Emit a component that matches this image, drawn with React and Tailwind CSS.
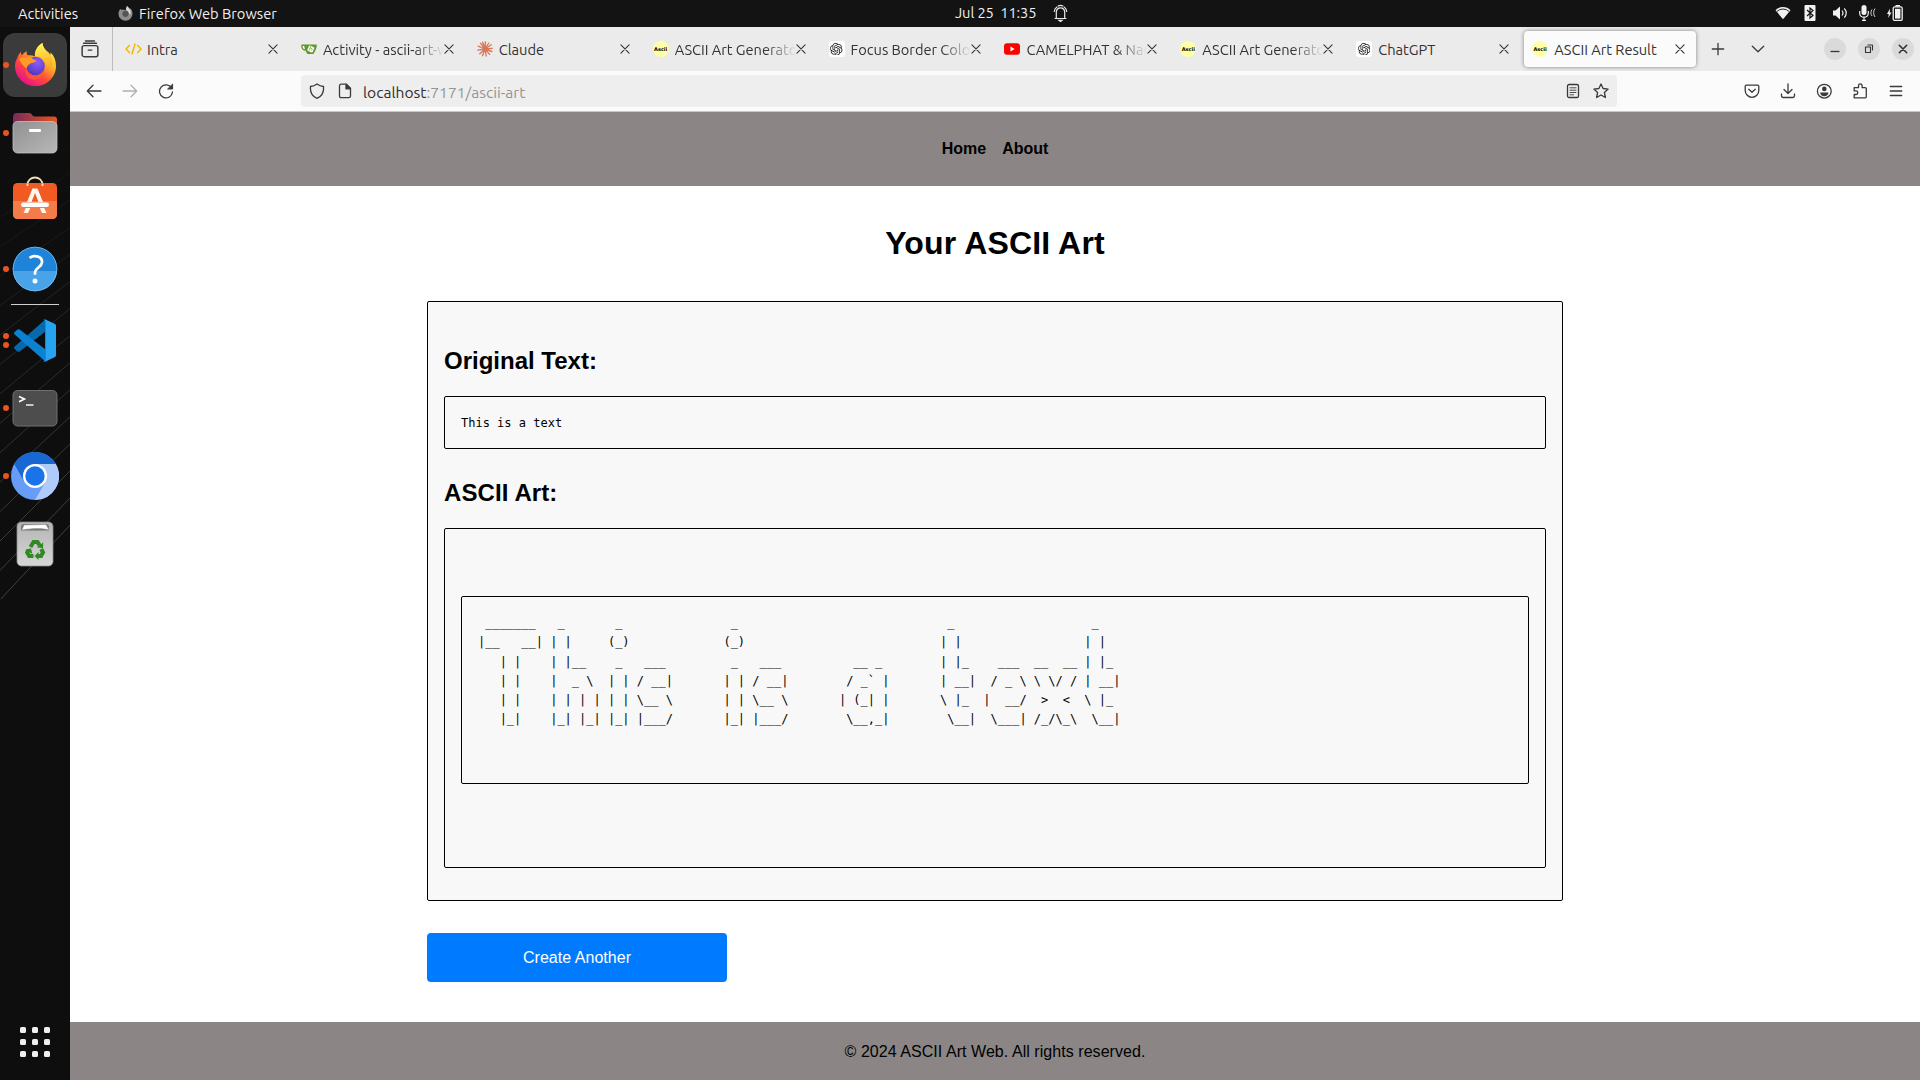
import React from "react";
import { SiOpenai } from "react-icons/si";

const UI = "font-['Ubuntu','Noto_Sans',sans-serif]";

const ART = [
  String.raw` _______   _       _               _                             _                   _`,
  String.raw`|__   __| | |     (_)             (_)                           | |                 | |`,
  String.raw`   | |    | |__    _   ___         _   ___          __ _        | |_    ___  __  __ | |_`,
  String.raw`   | |    |  _ \  | | / __|       | | / __|        / _${"`"} |       | __|  / _ \ \ \/ / | __|`,
  String.raw`   | |    | | | | | | \__ \       | | \__ \       | (_| |       \ |_  |  __/  >  <  \ |_`,
  String.raw`   |_|    |_| |_| |_| |___/       |_| |___/        \__,_|        \__|  \___| /_/\_\  \__|`,
].join("\n");

function Line({ className = "", size = 16, children }) {
  return (
    <svg
      width={size}
      height={size}
      viewBox="0 0 16 16"
      fill="none"
      stroke="currentColor"
      strokeWidth="1.3"
      strokeLinecap="round"
      strokeLinejoin="round"
      className={"shrink-0 " + className}
    >
      {children}
    </svg>
  );
}

/* ---------- favicons ---------- */
const AsciiFav = () => (
  <span className="flex size-4 shrink-0 items-center justify-center rounded-full bg-[#ffffa6] font-['DejaVu_Sans'] text-[5px] font-bold leading-none text-black">
    Ascii
  </span>
);
const GptFav = () => (
  <span className="flex size-4 shrink-0 items-center justify-center rounded-[3px] bg-white text-[12.5px] text-[#222]">
    <SiOpenai />
  </span>
);
const IntraFav = () => (
  <svg width="17" height="16" viewBox="0 0 17 16" fill="none" stroke="#f5b800" strokeWidth="1.5" className="-mr-px shrink-0">
    <path d="M4.8 4 1 8l3.8 4M12.2 4 16 8l-3.8 4M10.2 2.5 6.8 13.5" />
  </svg>
);
const GiteaFav = () => (
  <svg width="16" height="16" viewBox="0 0 16 16" className="shrink-0">
    <path d="M1 3.4h14.6c.5 2.600-.5 4.800-2.500 8.500-.5.9-1.100 1.200-2 1.200H7.600c-1 0-1.600-.5-2.100-1.500L4.700 9.800C2.200 9.700.2 7.800.2 5.200c0-.8.2-1.800.8-1.800Z" fill="#609926" />
    <path d="M1.600 4.900c0 1.800.8 3 2.300 3.400L3.200 4.900Z" fill="#fff" />
    <rect x="6.900" y="5.100" width="5.800" height="5.800" rx="1" transform="rotate(25 9.800 8)" fill="#fff" />
    <path d="m10 4.500-1.800 5M9.300 7l2 1-.7 1.600" stroke="#609926" strokeWidth=".7" fill="none" />
  </svg>
);
const ClaudeFav = () => (
  <svg width="16" height="16" viewBox="0 0 16 16" stroke="#d97757" strokeWidth="1.35" strokeLinecap="round" className="shrink-0">
    <path d="M8 8 8.400.9M8 8l3.800-6M8 8l6.300-4.200M8 8l7.200-.7M8 8l6.900 2.500M8 8l4.600 5.400M8 8l1.200 7M8 8l-2.500 6.700M8 8l-5.200 4.800M8 8 .8 9.100M8 8 1.200 5.200M8 8 3.500 2.200M8 8 5.700 1.200" />
  </svg>
);
const YoutubeFav = () => (
  <svg width="16" height="16" viewBox="0 0 16 16" className="shrink-0">
    <rect x="0" y="2.200" width="16" height="11.500" rx="3" fill="#f00" />
    <path d="M6.500 5.600v4.800L10.600 8Z" fill="#fff" />
  </svg>
);

const Cross = () => (
  <Line size={10} className="text-[#3a3a3a]">
    <path d="M1.500 1.500l13 13M14.500 1.500l-13 13" strokeWidth="1.900" />
  </Line>
);

const TABS = [
  { t: "Intra", icon: IntraFav },
  { t: "Activity - ascii-art-web", icon: GiteaFav, fade: true },
  { t: "Claude", icon: ClaudeFav },
  { t: "ASCII Art Generator", icon: AsciiFav, fade: true },
  { t: "Focus Border Color", icon: GptFav, fade: true },
  { t: "CAMELPHAT & Nadia", icon: YoutubeFav, fade: true },
  { t: "ASCII Art Generator", icon: AsciiFav, fade: true },
  { t: "ChatGPT", icon: GptFav },
  { t: "ASCII Art Result", icon: AsciiFav, active: true },
];

function Tab({ t, icon: Icon, fade, active }) {
  return (
    <div className="flex h-11 w-[175.9px] shrink-0 items-center px-[2px]">
      <div
        className={
          "flex h-9 w-full items-center rounded-[4px] pl-2 pr-[11px] " +
          (active ? "bg-[#fbfbfb] shadow-[0_0_4px_rgba(0,0,0,0.45)]" : "")
        }
      >
        <Icon />
        <span
          className={
            "ml-[6px] min-w-0 flex-1 overflow-hidden whitespace-nowrap pt-[2px] text-[14.667px] leading-5 tracking-[-0.03px] text-[#333]" +
            (fade ? " [mask-image:linear-gradient(to_right,#000_75%,transparent)]" : "")
          }
        >
          {t}
        </span>
        <Cross />
      </div>
    </div>
  );
}

/* ---------- desktop top bar ---------- */
function TopBar() {
  return (
    <div className={"flex h-[27px] shrink-0 items-center bg-[#131313] text-[14.667px] leading-none text-[#f0f0f0] " + UI}>
      <div className="flex w-[955px] items-center pl-[18px] pt-px">
        <span className="w-[100px]">Activities</span>
        <svg width="15" height="15" viewBox="0 0 16 16" className="mb-[2px]">
          <path d="M1 5.500 2.400 3l1.200 1.300L5 3.800 8 4.500 9.600 0c1 1.400 2.200 2 2.800 3.300l1.100-.6c1.300 1.500 2 3.500 2 5.500A7.500 7.500 0 0 1 8 15.800 7.500 7.500 0 0 1 .5 8.500c0-1 .1-2 .5-3Z" fill="#8d8d8d" />
          <path d="M9.600 0c1 1.400 2.200 2 2.800 3.300 1.600 1.900 1.600 4.500.3 6.600C12.500 7 9 5.500 8.500 3Z" fill="#d8d8d8" />
          <circle cx="8" cy="8.300" r="3.300" fill="#555" />
        </svg>
        <span className="ml-[6px] whitespace-nowrap">Firefox Web Browser</span>
      </div>
      <div className="flex flex-1 items-center">
        <span className="w-[97px] whitespace-pre tracking-[-0.1px]">Jul 25  11:35</span>
        <svg width="17" height="18" viewBox="0 0 17 18" fill="none" stroke="#e8e8e8" strokeWidth="1.200" strokeLinecap="round" className="mb-px">
          <path d="M3 14.500h11M4.300 14.300V8a4.200 4.200 0 0 1 8.400 0v6.300M5 3C3.200 4 2.500 5.500 2.300 7.500M12 3c1.800 1 2.500 2.500 2.700 4.500M6.300 1.900c1.400-.6 3-.6 4.400 0" />
          <path d="M7 16.300h3l-1.500 1.300Z" fill="#e8e8e8" />
        </svg>
      </div>
      <div className="mb-px flex items-center pr-[17px]">
        <svg width="16" height="16" viewBox="0 0 16 16" className="mr-[13px]">
          <path d="M.5 5.200a10.600 10.600 0 0 1 15 0L8 14.200Z" fill="#f2f2f2" />
          <path d="M1.800 6.500a9 9 0 0 1 12.400 0" stroke="#131313" strokeWidth=".9" fill="none" />
        </svg>
        <svg width="12" height="16" viewBox="0 0 12 16" className="mr-4">
          <rect x=".5" width="11" height="16" rx="1" fill="#f2f2f2" />
          <path d="M3 5l6 5.500-3 2.500V3l3 2.500L3 11" fill="none" stroke="#131313" strokeWidth="1.200" />
        </svg>
        <svg width="16" height="16" viewBox="0 0 16 16" className="mr-[10px]">
          <path d="M1 5.500h2.500L8 1.500v13l-4.500-4H1Z" fill="#f2f2f2" />
          <path d="M10 5.500c1.200 1.500 1.200 3.500 0 5M12.300 3.300c2.300 2.800 2.300 6.600 0 9.400" fill="none" stroke="#f2f2f2" strokeWidth="1.200" />
        </svg>
        <svg width="18" height="16" viewBox="0 0 18 16" className="mr-[10px]">
          <rect x="3.500" y="0" width="5" height="10" rx="2.500" fill="#f2f2f2" />
          <path d="M1.700 6v2.200c0 5.300 8.600 5.300 8.600 0V6M6 12v3M4 15.400h4" fill="none" stroke="#f2f2f2" strokeWidth="1.200" />
          <path d="M14 4.500c-1.500 2-1.500 4.500 0 6.500M17 3.500c-1.800 2.600-1.800 6 0 8.500" fill="none" stroke="#d0d0d0" strokeWidth="1" />
        </svg>
        <svg width="17" height="16" viewBox="0 0 17 16">
          <path d="M4 3.500 1 9h1.800l-.6 4L5.500 7.500H3.700Z" fill="#f2f2f2" />
          <rect x="7.200" y="1.900" width="9" height="13.500" rx="1.500" fill="none" stroke="#f2f2f2" strokeWidth="1.300" />
          <rect x="9" y="3.800" width="5.400" height="9.800" fill="#f2f2f2" />
          <rect x="9.500" y="0" width="4.500" height="1.500" fill="#f2f2f2" />
        </svg>
      </div>
    </div>
  );
}

/* ---------- dock ---------- */
const FirefoxIcon = () => (
  <svg width="43" height="45" viewBox="0 0 44 46" className="-mt-[2px]">
    <defs>
      <linearGradient id="ff1" x1=".85" y1=".1" x2=".25" y2=".95">
        <stop offset="0" stopColor="#fff04a" />
        <stop offset=".35" stopColor="#ffb024" />
        <stop offset=".65" stopColor="#ff4a3a" />
        <stop offset="1" stopColor="#e8128a" />
      </linearGradient>
      <radialGradient id="ff2" cx=".6" cy=".3" r=".8">
        <stop offset="0" stopColor="#9059ff" />
        <stop offset="1" stopColor="#4a36b0" />
      </radialGradient>
      <linearGradient id="ff3" x1=".6" y1="0" x2=".8" y2="1">
        <stop offset="0" stopColor="#fff44f" />
        <stop offset="1" stopColor="#ff9a1f" />
      </linearGradient>
    </defs>
    <path d="M3 17c1-3 2.500-5 4-7 0 1.500.3 2.600 1 3.500C9.500 12 11 10.500 13 9.500c-.3 1.700 0 3 .8 4 4 0 6 .5 8.200 1.500C21 9 24 4 29 1c.5 4.500 3 7 6.500 10 .6.800 1 1.500 1.500 2.500.4-1.200.5-2 .3-3C41 14 43 19 43 24.500 43 36 33.500 45 22 45S1 36 1 24.500c0-3 .7-5.500 2-7.500Z" fill="url(#ff1)" />
    <path d="M29 1c.5 4.500 3 7 6.500 10 5 5.500 4.500 14 .5 19 .5-7-5-11-8.500-14.500-2-1.500-4.500-1-6-.5C20.500 9.500 24 4 29 1Z" fill="url(#ff3)" />
    <circle cx="22" cy="24.500" r="9.500" fill="url(#ff2)" />
    <path d="M5 17.500c4-2.500 10-3.500 14-.5 1.500.8 4 2 4 2-1 2.300-5.500 2.200-7.500 4-1.500 1.300-2.500 2-2.500 4C9.500 25 7 21 5 17.500Z" fill="#ff9a24" />
    <path d="M13 26c0 6 7 10.500 13 7 2.500-1.200 4-3 5-6 1 6-4 12-11 11.500C14 38 10 32 13 26Z" fill="#ff5b36" opacity=".8" />
  </svg>
);
const FilesIcon = () => (
  <svg width="46" height="42" viewBox="0 0 46 42">
    <defs>
      <linearGradient id="fo1"><stop offset="0" stopColor="#7a2a5a" /><stop offset="1" stopColor="#e9541f" /></linearGradient>
      <linearGradient id="fo2" x2="1" y2="1"><stop offset="0" stopColor="#909090" /><stop offset="1" stopColor="#b8b8b8" /></linearGradient>
    </defs>
    <path d="M1 5a4 4 0 0 1 4-4h12.500c2 0 3 3.500 5 3.500H42a3 3 0 0 1 3 3V20H1Z" fill="url(#fo1)" />
    <rect x="1" y="9.500" width="44" height="31.500" rx="4.500" fill="url(#fo2)" stroke="#c2c2c2" strokeWidth=".8" />
    <rect x="17" y="17" width="12" height="3" rx="1.200" fill="#fff" />
  </svg>
);
const SoftwareIcon = () => (
  <svg width="46" height="44" viewBox="0 0 46 44">
    <path d="M15.500 9c0-10 15-10 15 0" fill="none" stroke="#f4dcb4" strokeWidth="1.800" />
    <rect x="1" y="7" width="44" height="36" rx="4.500" fill="#f15a22" />
    <path d="M1 25h44v13.500a4.500 4.500 0 0 1-4.500 4.500h-35A4.500 4.500 0 0 1 1 38.500Z" fill="#f47c48" />
    <path d="M15.500 10V7.500M30.500 10V7.500" stroke="#f9e3c4" strokeWidth="1.800" />
    <path d="M20.500 12.500h5L31 26h-4.500L23 17l-3.500 9H15Z" fill="#fff6ee" />
    <path d="M13.800 32h4.500L16 37h-4.500ZM27.700 32h4.500l2.300 5H30Z" fill="#fff6ee" />
    <rect x="9" y="26.500" width="28" height="4.500" rx="2.200" fill="#fff" />
  </svg>
);
const HelpIcon = () => (
  <svg width="46" height="46" viewBox="0 0 46 46">
    <defs><clipPath id="hc"><circle cx="23" cy="23" r="22.300" /></clipPath></defs>
    <g clipPath="url(#hc)">
      <rect width="46" height="46" fill="#1f83d8" />
      <rect y="25" width="46" height="21" fill="#48a3e8" />
    </g>
    <circle cx="23" cy="23" r="21.800" fill="none" stroke="#79b9ea" strokeWidth=".8" />
    <path d="M17.500 11.800c5-3.200 13-1.500 12.500 4.500-.4 5-7 5.500-7 10.500v2" fill="none" stroke="#fff" strokeWidth="2.700" />
    <circle cx="23" cy="35" r="2.500" fill="#fff" />
  </svg>
);
const CodeIcon = () => (
  <svg width="42" height="43" viewBox="0 0 42 43">
    <path d="m31 .8.2 12L6 32.300c-1 .8-2 .7-2.800 0L.7 30c-.8-.8-.8-1.700 0-2.500Z" fill="#0669ad" />
    <path d="M.7 15.500c-.8-.8-.8-1.700 0-2.500L3.200 10.700c.8-.7 1.800-.8 2.800 0l25.200 19.500-.2 12Z" fill="#0a82d1" />
    <path d="M31.500.6 41 5c.7.400 1 1 1 1.700v29.600c0 .7-.3 1.300-1 1.700l-9.500 4.400c-1 .400-1.700.1-2.500-.5 1.200.4 2.200-.2 2.200-1.400V2.500c0-1.200-1-1.800-2.200-1.400.8-.6 1.500-.9 2.500-.5Z" fill="#26a4f2" />
  </svg>
);
const TerminalIcon = () => (
  <svg width="46" height="38" viewBox="0 0 46 38">
    <rect x="1" y="1.500" width="44" height="35.500" rx="4.500" fill="#4d4d4d" stroke="#707070" />
    <path d="m7 7.500 5.500 2.500L7 12.800" fill="none" stroke="#fff" strokeWidth="1.600" />
    <path d="M14 16h7.500" stroke="#fff" strokeWidth="1.400" />
  </svg>
);
const ChromiumIcon = () => (
  <svg width="48" height="48" viewBox="0 0 48 48">
    <circle cx="24" cy="24" r="24" fill="#669df6" />
    <path d="M24 12h20.800A24 24 0 0 1 24 48l10.400-18Z" fill="#aecbfa" />
    <path d="M3.200 12A24 24 0 0 1 44.800 12H24A12 12 0 0 0 13.600 30Z" fill="#1967d2" />
    <circle cx="24" cy="24" r="12" fill="#fff" />
    <circle cx="24" cy="24" r="9.700" fill="#1a73e8" />
  </svg>
);
const TrashIcon = () => (
  <svg width="38" height="46" viewBox="0 0 38 46">
    <defs><linearGradient id="tr" x2="0" y2="1"><stop offset="0" stopColor="#b5b5b5" /><stop offset="1" stopColor="#d6d6d6" /></linearGradient></defs>
    <rect x="1" y="1" width="36" height="44" rx="4.500" fill="url(#tr)" stroke="#8b8b8b" strokeWidth=".8" />
    <path d="M5 9.500V6a3 3 0 0 1 3-3h22a3 3 0 0 1 3 3v3.500Z" fill="#777" />
    <path d="m6 9 2-5 22-.5L33 9c-5-2-17-2-27 0Z" fill="#fff" stroke="#999" strokeWidth=".5" />
    <g fill="none" stroke="#2f8a22" strokeWidth="4">
      <path d="m14.500 26 3-5h4l2.200 3.500" />
      <path d="m25.200 28 1.800 3.500-2 3.500h-3.500" />
      <path d="M17.500 35h-4.300l-2-3.500 1.600-2.800" />
    </g>
    <path d="m20.800 26.500 6.200.6.200-5.500ZM22.500 31l-4 4 4 4ZM9 29l6-1.700 1.300 5.500Z" fill="#2f8a22" />
  </svg>
);

function DockItem({ dots = 0, active, children }) {
  return (
    <div className="relative flex h-[68px] w-[70px] shrink-0 items-center justify-center">
      <div className={"flex size-16 items-center justify-center rounded-[12px] " + (active ? "bg-[#3b3b3b]" : "")}>{children}</div>
      <div className="absolute inset-y-0 left-[3px] flex flex-col justify-center gap-[3px]">
        {Array.from({ length: dots }, (_, i) => (
          <span key={i} className="size-[6px] rounded-full bg-[#e95420]" />
        ))}
      </div>
    </div>
  );
}

function Dock() {
  return (
    <div className="relative flex w-[70px] shrink-0 flex-col overflow-hidden bg-[#0e0e0e] pt-1">
      <svg width="70" height="572" viewBox="0 0 70 572" className="absolute left-0 top-0" stroke="#fff" fill="none">
        {Array.from({ length: 15 }, (_, i) => (
          <path key={i} d={`M-2 ${162 + i * 29.500}L72 ${118 + i * 27}`} strokeOpacity={0.02 + i * 0.014} />
        ))}
      </svg>
      <DockItem active dots={1}><FirefoxIcon /></DockItem>
      <DockItem dots={1}><FilesIcon /></DockItem>
      <DockItem><div className="-mt-[6px]"><SoftwareIcon /></div></DockItem>
      <DockItem dots={1}><HelpIcon /></DockItem>
      <div className="relative mx-[11px] mb-px mt-px h-px shrink-0 bg-[#cfcfcf]" />
      <DockItem dots={2}><CodeIcon /></DockItem>
      <DockItem dots={1}><TerminalIcon /></DockItem>
      <DockItem dots={1}><ChromiumIcon /></DockItem>
      <DockItem><TrashIcon /></DockItem>
      <div className="mb-[23px] mt-auto grid grid-cols-3 gap-[6px] self-center">
        {Array.from({ length: 9 }, (_, i) => (
          <span key={i} className="size-[6px] rounded-[1.5px] bg-[#f0efed]" />
        ))}
      </div>
    </div>
  );
}

/* ---------- browser chrome ---------- */
const Round = ({ children }) => (
  <span className="flex size-[22px] items-center justify-center rounded-full bg-[#dadada] text-[#333]">{children}</span>
);

function TabBar() {
  return (
    <div className="flex h-11 shrink-0 items-center bg-[#ebebeb] text-[#3a3a3a]">
      <div className="mr-[2px] flex h-11 w-[43px] items-center justify-center border-r border-[#bdbdbd] pr-[2px]">
        <Line size={18} className="-ml-px">
          <rect x="1" y="5" width="14" height="9.800" rx="1.800" />
          <path d="M2.300 2.900h11.400M4 .8h8M6.500 9h3" />
        </Line>
      </div>
      {TABS.map((tab, i) => (
        <Tab key={i} {...tab} />
      ))}
      <Line size={16} className="ml-[11.500px]"><path d="M8 2.300v11.400M2.300 8h11.400" /></Line>
      <Line size={16} className="ml-[24.500px]"><path d="m2.300 5.300 5.700 5.400 5.700-5.400" /></Line>
      <div className="ml-auto flex gap-3 pr-[6px]">
        <Round><Line><path d="M4.200 10.500h7.600" strokeLinecap="square" /></Line></Round>
        <Round><Line><path d="M4.500 6h5v5.500h-5ZM7 4h4.500v5" strokeLinecap="square" strokeWidth="1.100" /></Line></Round>
        <Round><Line><path d="m4.300 4.300 7.400 7.400M11.700 4.300l-7.400 7.400" strokeWidth="1.600" /></Line></Round>
      </div>
    </div>
  );
}

function UrlRow() {
  return (
    <div className="flex h-[41px] shrink-0 border-b border-[#c8c8c8] bg-[#fbfbfb] pt-1 text-[#3a3a3a]">
      <div className="flex h-8 w-[231px] items-center gap-5 pl-4">
        <Line><path d="M15 8H1.300M7 2.200 1.300 8 7 13.800" /></Line>
        <Line className="text-[#b0b0b0]"><path d="M1 8h13.700M9 2.200 14.700 8 9 13.800" /></Line>
        <Line>
          <path d="M13.600 5A6.500 6.500 0 1 0 14.500 9" />
          <path d="M14.600 1.500V6H10Z" fill="currentColor" strokeWidth="1" />
        </Line>
      </div>
      <div className="flex h-8 w-[1316px] items-center rounded-[4px] bg-[#eeeeee] pl-2 pr-2">
        <Line><path d="M8 .9c2 1.500 4 2.300 6.500 2.600C15 9 12.500 13.500 8 15.300 3.500 13.500 1 9 1.500 3.500 4 3.200 6 2.400 8 .9Z" /></Line>
        <Line className="ml-3">
          <path d="M4 1.200h5.500l4 4V13a1.700 1.700 0 0 1-1.700 1.700H4.200A1.700 1.700 0 0 1 2.500 13V2.900A1.700 1.700 0 0 1 4 1.200Z" />
          <path d="M9 1.500v4.300h4.300Z" fill="currentColor" />
        </Line>
        <span className="ml-[10px] whitespace-nowrap pt-px text-[15.6px] leading-5 text-[#2e2e2e]">
          localhost<span className="text-[#949494]">:7171/ascii-art</span>
        </span>
        <Line className="ml-auto">
          <rect x="2.500" y="1.500" width="11" height="13" rx="1.600" />
          <path d="M5 4.800h6M5 7.200h6M5 9.500h6M5 11.800h3.500" strokeWidth=".9" />
        </Line>
        <Line className="ml-3">
          <path d="m8 1 2.100 4.500 5 .6-3.700 3.400 1 5L8 12l-4.400 2.500 1-5L.9 6.100l5-.6Z" />
        </Line>
      </div>
      <div className="ml-auto flex h-8 items-center gap-5 pr-4">
        <Line>
          <path d="M2.500 2.200h11a1.300 1.300 0 0 1 1.300 1.300V7.500a6.800 6.800 0 0 1-13.600 0V3.500a1.300 1.300 0 0 1 1.300-1.300Z" />
          <path d="M4.800 6.300 8 9.300l3.200-3" />
        </Line>
        <Line><path d="M8 .8v9.500M4 6.500l4 4 4-4M1.500 11v1.800A1.700 1.700 0 0 0 3.200 14.500h9.600a1.700 1.700 0 0 0 1.700-1.700V11" /></Line>
        <Line>
          <circle cx="8.300" cy="8.200" r="6.900" />
          <circle cx="8.300" cy="5.900" r="2.300" fill="currentColor" stroke="none" />
          <path d="M4.100 9.400h8.400c0 2.200-2 3.800-4.200 3.800s-4.200-1.600-4.200-3.800Z" fill="currentColor" stroke="none" />
        </Line>
        <Line>
          <path d="M2.200 14.800V11.500H4a1.800 1.800 0 0 0 0-3.600H2.200V4.700H6.500V2.700a1.800 1.800 0 0 1 3.600 0V4.700h3a1.200 1.200 0 0 1 1.200 1.200v7.700a1.200 1.200 0 0 1-1.200 1.200Z" />
        </Line>
        <Line><path d="M2.300 3.500h11.400M2.300 8h11.400M2.300 12.500h11.400" /></Line>
      </div>
    </div>
  );
}

/* ---------- web page ---------- */
const PRE = "rounded-[2px] border border-black font-['DejaVu_Sans_Mono',monospace] text-[12px] leading-[19.2px]";

function Page() {
  return (
    <div className="flex flex-1 flex-col bg-white font-['Liberation_Sans',Arial,sans-serif] text-[16px] leading-[25.6px] text-black">
      <nav className="flex h-[74px] items-center justify-center gap-4 bg-[#8b8685] font-bold">
        <a>Home</a>
        <a>About</a>
      </nav>
      <main className="mx-auto flex w-[1136px] flex-1 flex-col">
        <h1 className="mt-8 text-center text-[32px] font-bold leading-[51px] tracking-[0.15px]">Your ASCII Art</h1>
        <section className="mt-8 h-[600px] rounded-[2px] border border-black bg-[#f8f8f8] px-4">
          <h2 className="mt-[40px] text-[24px] font-bold leading-[38px]">Original Text:</h2>
          <pre className={"mt-[16px] h-[53px] px-4 pt-[17px] " + PRE}>This is a text</pre>
          <h2 className="mt-[25px] text-[24px] font-bold leading-[38px] tracking-[0.1px]">ASCII Art:</h2>
          <div className="mt-4 h-[340px] rounded-[2px] border border-black px-4 pt-[67px]">
            <pre className={"h-[188px] px-4 pt-[17.2px] tracking-[-0.006px] " + PRE}>{ART}</pre>
          </div>
        </section>
        <a className="mt-8 flex h-[49px] w-[300px] items-center justify-center rounded-[4px] bg-[#007bff] tracking-[0.03px] text-white">
          Create Another
        </a>
      </main>
      <footer className="flex h-[58px] items-center justify-center bg-[#8b8685] pt-[2px] tracking-[0.05px]">
        © 2024 ASCII Art Web. All rights reserved.
      </footer>
    </div>
  );
}

export default function App() {
  return (
    <div className="flex h-[1080px] w-[1920px] flex-col overflow-hidden bg-[#0e0e0e]">
      <TopBar />
      <div className="flex min-h-0 flex-1">
        <Dock />
        <div className={"flex min-w-0 flex-1 flex-col " + UI}>
          <TabBar />
          <UrlRow />
          <Page />
        </div>
      </div>
    </div>
  );
}
